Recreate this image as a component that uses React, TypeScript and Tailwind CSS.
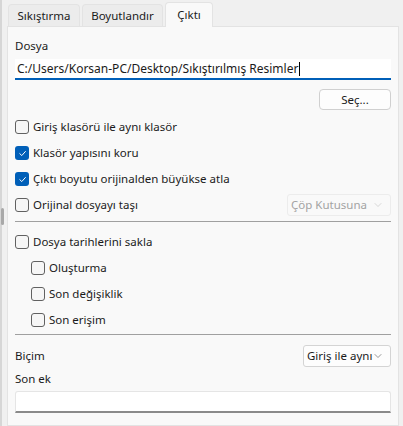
import { ChevronDown } from "lucide-react";

const font = { fontFamily: '"Noto Sans", "Open Sans", sans-serif' };

function Box({ checked }: { checked?: boolean }) {
  if (checked) {
    return (
      <span className="flex h-[14px] w-[14px] shrink-0 items-center justify-center rounded-[3px] bg-[#005fb8]">
        <svg width="9" height="9" viewBox="0 0 10 10" fill="none">
          <path d="M2 5.2 4.2 7.3 8.2 2.8" stroke="white" strokeWidth="1.1" strokeLinecap="round" strokeLinejoin="round" />
        </svg>
      </span>
    );
  }
  return <span className="h-[14px] w-[14px] shrink-0 rounded-[3px] border border-[#616161] bg-[#f6f6f6]" />;
}

function Check({ label, checked, indent }: { label: string; checked?: boolean; indent?: boolean }) {
  return (
    <label className={`flex h-[26px] items-center gap-[4px] whitespace-nowrap ${indent ? "pl-[16px]" : ""}`}>
      <Box checked={checked} />
      <span>{label}</span>
    </label>
  );
}

function Combo({ text, disabled, width }: { text: string; disabled?: boolean; width: string }) {
  return (
    <div
      className={`flex h-[22px] items-center justify-between whitespace-nowrap rounded-[3px] border pl-[3px] pr-[6px] ${width} ${
        disabled ? "border-[#ececec] bg-[#f9f9f9] text-[#a3a3a3]" : "border-[#d4d4d4] bg-[#fdfdfd] text-[#1b1b1b]"
      }`}
    >
      <span>{text}</span>
      <ChevronDown className={`h-3 w-3 shrink-0 ${disabled ? "text-[#c4c4c4]" : "text-[#606060]"}`} strokeWidth={1.3} />
    </div>
  );
}

export default function App() {
  return (
    <div className="flex h-[426px] w-[403px] overflow-hidden bg-[#f0f0f0] text-[11.5px] text-[#1b1b1b]" style={font}>
      <div className="relative w-[2px] shrink-0 bg-[#d6d6d6]">
        <div className="absolute left-[1px] top-[208px] h-[17px] w-[3px] rounded-sm bg-[#a8a8a8]" />
      </div>
      <div className="flex min-w-0 flex-1 flex-col pl-[5px] pr-[4px] pt-[2px]">
        <div className="flex items-end gap-[2px] pl-[1px]">
          <div className="flex h-[22px] w-[72px] items-center justify-center rounded-t-[4px] border border-b-0 border-[#e3e3e3] bg-[#ececec]">Sıkıştırma</div>
          <div className="flex h-[22px] w-[81px] items-center justify-center rounded-t-[4px] border border-b-0 border-[#e3e3e3] bg-[#ececec]">Boyutlandır</div>
          <div className="z-10 -mb-px flex h-[25px] w-[48px] items-center justify-center rounded-t-[4px] border border-b-0 border-[#e3e3e3] bg-[#f9f9f9]">Çıktı</div>
        </div>
        <div className="flex flex-1 flex-col border border-[#e3e3e3] bg-[#f9f9f9] px-[7px] pt-[9px]">
          <div className="h-[20px] leading-[20px]">Dosya</div>
          <div className="mt-[3px] flex h-[21px] items-center border-b-2 border-[#005fb8] bg-white pl-[2px] text-[12px]">
            <span>C:/Users/Korsan-PC/Desktop/Sıkıştırılmış Resimler</span>
            <span className="ml-px h-[14px] w-px bg-black" />
          </div>
          <div className="mt-[9px] flex justify-end">
            <button className="h-[21px] w-[72px] rounded-[4px] border border-[#d0d0d0] bg-[#fdfdfd]">Seç...</button>
          </div>
          <div className="mt-[4px] flex flex-col">
            <Check label="Giriş klasörü ile aynı klasör" />
            <Check label="Klasör yapısını koru" checked />
            <Check label="Çıktı boyutu orijinalden büyükse atla" checked />
            <div className="flex items-center justify-between">
              <Check label="Orijinal dosyayı taşı" />
              <Combo text="Çöp Kutusuna" disabled width="w-[104px]" />
            </div>
          </div>
          <div className="mt-[3px] h-px bg-[#a0a0a0]" />
          <div className="mt-[7px] flex flex-col">
            <Check label="Dosya tarihlerini sakla" />
            <Check label="Oluşturma" indent />
            <Check label="Son değişiklik" indent />
            <Check label="Son erişim" indent />
          </div>
          <div className="mt-[1px] h-px bg-[#a0a0a0]" />
          <div className="mt-[10px] flex items-center justify-between">
            <span>Biçim</span>
            <Combo text="Giriş ile aynı" width="w-[88px]" />
          </div>
          <div className="mt-[2px] h-[20px] leading-[20px]">Son ek</div>
          <div className="mt-[2px] h-[22px] shrink-0 rounded-t-[3px] border border-b-2 border-[#e5e5e5] border-b-[#8a8a8a] bg-white" />
        </div>
      </div>
    </div>
  );
}
